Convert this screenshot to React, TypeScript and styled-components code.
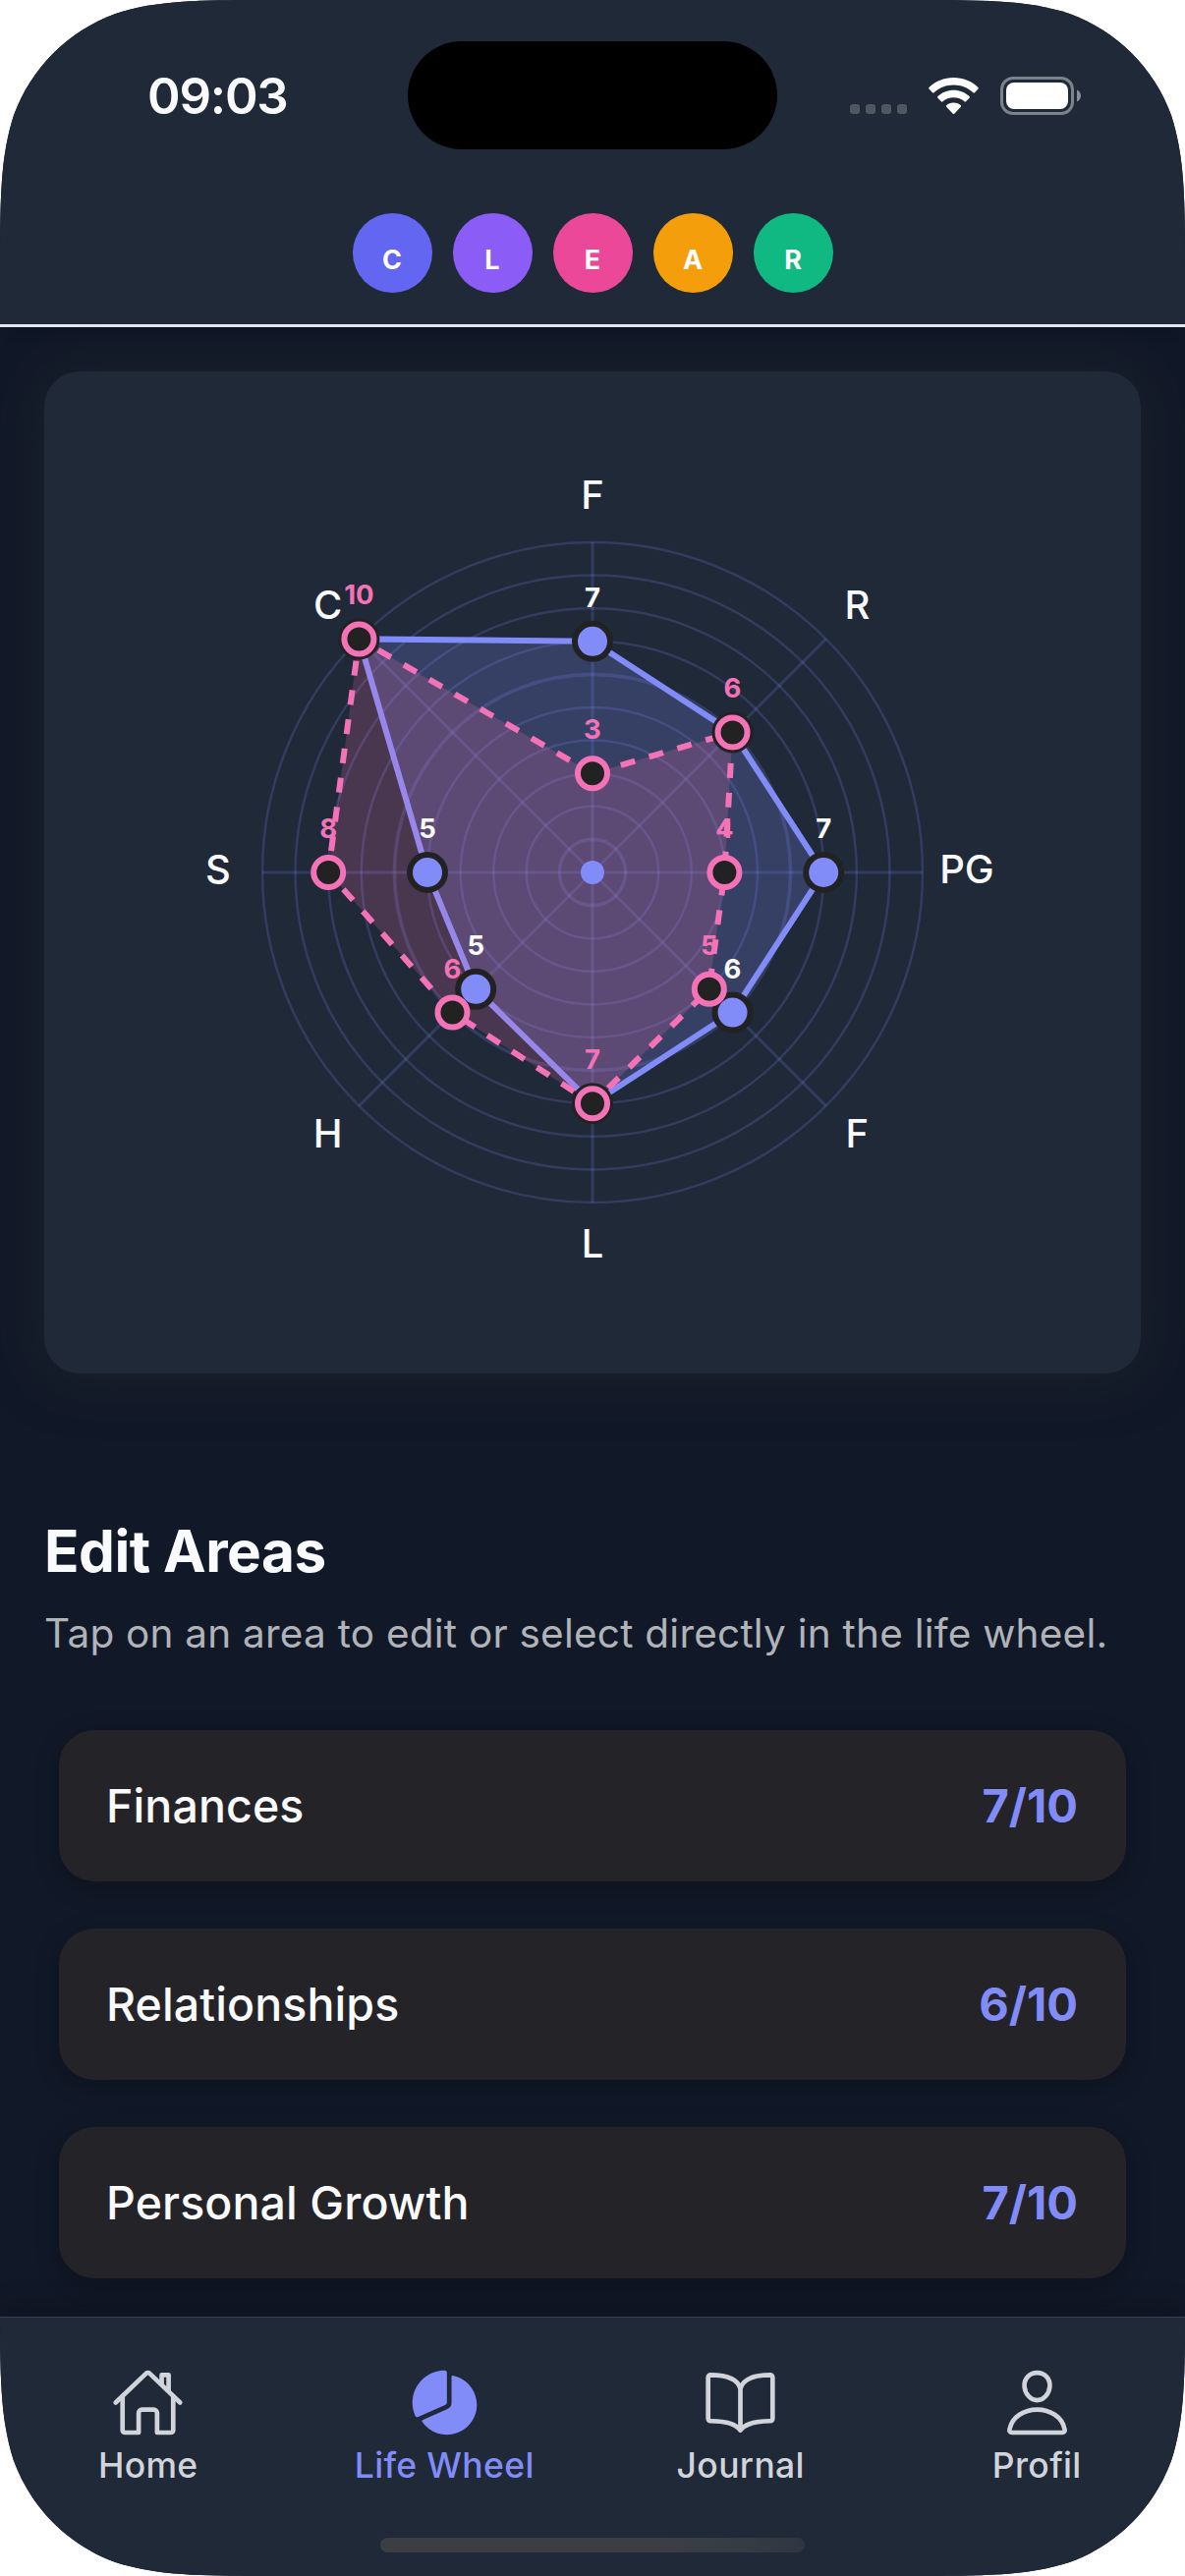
import React from 'react';
import styled, { createGlobalStyle } from 'styled-components';
import { IoHomeOutline, IoPieChart, IoBookOutline, IoPersonOutline } from 'react-icons/io5';

const WIDTH = 1206;
const HEIGHT = 2622;
const CORNER = 186;

const GlobalStyle = createGlobalStyle`
  html, body { margin: 0; padding: 0; background: #ffffff; }
  * { box-sizing: border-box; }
`;

/* Continuous-curvature corners of the phone's display. */
const screenOutline = (() => {
  const W = WIDTH;
  const H = HEIGHT;
  const [e, c1, c2, p, q, s, t] = [
    1.528665, 1.08849296, 0.86840694, 0.63149379, 0.07491139, 0.37282383, 0.16905956,
  ].map((k) => k * CORNER);
  return [
    `M${e} 0 L${W - e} 0`,
    `C${W - c1} 0 ${W - c2} 0 ${W - p} ${q}`,
    `C${W - s} ${t} ${W - t} ${s} ${W - q} ${p}`,
    `C${W} ${c2} ${W} ${c1} ${W} ${e}`,
    `L${W} ${H - e}`,
    `C${W} ${H - c1} ${W} ${H - c2} ${W - q} ${H - p}`,
    `C${W - t} ${H - s} ${W - s} ${H - t} ${W - p} ${H - q}`,
    `C${W - c2} ${H} ${W - c1} ${H} ${W - e} ${H}`,
    `L${e} ${H}`,
    `C${c1} ${H} ${c2} ${H} ${p} ${H - q}`,
    `C${s} ${H - t} ${t} ${H - s} ${q} ${H - p}`,
    `C0 ${H - c2} 0 ${H - c1} 0 ${H - e}`,
    `L0 ${e}`,
    `C0 ${c1} 0 ${c2} ${q} ${p}`,
    `C${t} ${s} ${s} ${t} ${p} ${q}`,
    `C${c2} 0 ${c1} 0 ${e} 0 Z`,
  ].join(' ');
})();

const Screen = styled.div`
  display: flex;
  flex-direction: column;
  width: ${WIDTH}px;
  height: ${HEIGHT}px;
  overflow: hidden;
  background: #111827;
  clip-path: path('${screenOutline}');
  font-family: Inter, 'Liberation Sans', sans-serif;
  color: #f9fafb;
`;

const Header = styled.header`
  position: relative;
  z-index: 1;
  flex: none;
  height: 333px;
  background: #1f2937;
  border-bottom: 3px solid #e5e7eb;
  box-shadow: 0 3px 12px rgba(0, 0, 0, 0.15);
`;

const StatusBar = styled.div`
  display: grid;
  grid-template-columns: 415px 376px 415px;
  align-items: center;
  height: 194px;
`;

const Clock = styled.div`
  padding-top: 1px;
  padding-left: 150px;
  font-size: 51px;
  font-weight: 600;
  line-height: 60px;
  letter-spacing: -1.2px;
`;

const Island = styled.div`
  height: 110px;
  border-radius: 55px;
  background: #000000;
`;

const Indicators = styled.div`
  display: flex;
  align-items: flex-end;
  gap: 22px;
  height: 39px;
  padding-left: 74px;
`;

const SignalDots = styled.div`
  display: flex;
  gap: 6px;
  margin-bottom: 1px;
`;

const SignalDot = styled.span`
  width: 10px;
  height: 10px;
  border-radius: 3px;
  background: #505761;
`;

const StepRow = styled.div`
  display: flex;
  justify-content: center;
  gap: 21px;
  padding-top: 23px;
`;

const StepBadge = styled.div<{ $color: string }>`
  display: flex;
  align-items: center;
  justify-content: center;
  width: 81px;
  height: 81px;
  padding-top: 14px;
  border-radius: 50%;
  background: ${(p) => p.$color};
  font-size: 27px;
  font-weight: 700;
  line-height: 32px;
  color: #ffffff;
`;

const Content = styled.main`
  flex: 1;
  min-height: 0;
  overflow: hidden;
  padding: 45px 45px 0;
`;

const WheelCard = styled.section`
  display: flex;
  height: 1020px;
  border-radius: 36px;
  background: #1f2937;
  box-shadow: 0 3px 54px rgba(34, 42, 48, 0.72);
`;

const SectionTitle = styled.h2`
  margin: 145px 0 0;
  font-size: 58.5px;
  font-weight: 700;
  line-height: 72px;
  letter-spacing: -0.5px;
`;

const SectionHint = styled.p`
  margin: 18px 0 0;
  font-size: 40.5px;
  font-weight: 400;
  line-height: 60px;
  letter-spacing: 0.23px;
  white-space: nowrap;
  color: #b0b3b8;
`;

const AreaList = styled.div`
  display: flex;
  flex-direction: column;
  gap: 48px;
  margin: 68px 15px 0;
`;

const AreaRow = styled.div`
  display: flex;
  align-items: center;
  justify-content: space-between;
  height: 154px;
  padding: 0 49px 0 48px;
  border-radius: 36px;
  background: #242328;
  box-shadow: 0 6px 24px rgba(0, 0, 0, 0.25);
`;

const AreaName = styled.span`
  font-size: 46.5px;
  font-weight: 500;
  line-height: 60px;
  letter-spacing: 0.1px;
`;

const AreaScore = styled.span`
  font-size: 47px;
  font-weight: 700;
  line-height: 60px;
  color: #818cf8;
`;

const TabBar = styled.nav`
  position: relative;
  display: grid;
  grid-template-columns: repeat(4, 1fr);
  flex: none;
  height: 264px;
  padding-top: 49px;
  border-top: 1px solid #374151;
  background: #1f2937;
  box-shadow: 0 -3px 30px rgba(0, 0, 0, 0.3);
`;

const Tab = styled.div<{ $active?: boolean }>`
  display: flex;
  flex-direction: column;
  align-items: center;
  height: 130px;
  color: ${(p) => (p.$active ? '#818cf8' : '#d1d5db')};
  svg { width: 75px; height: 75px; }
`;

const TabLabel = styled.span`
  margin-top: 7px;
  font-size: 35.5px;
  font-weight: 500;
  line-height: 40px;
  letter-spacing: 0.35px;
  white-space: nowrap;
`;

const HomeIndicator = styled.div`
  position: absolute;
  left: 387px;
  bottom: 24px;
  width: 432px;
  height: 15px;
  border-radius: 8px;
  background: linear-gradient(90deg, #3b3e43 0%, #3b3f44 65%, #373c44 85%, #2e3641 100%);
`;

const steps = [
  { letter: 'C', color: '#6366f1' },
  { letter: 'L', color: '#8b5cf6' },
  { letter: 'E', color: '#ec4899' },
  { letter: 'A', color: '#f59e0b' },
  { letter: 'R', color: '#10b981' },
];

const areas = [
  { label: 'F', current: 7, target: 3 },
  { label: 'R', current: 6, target: 6 },
  { label: 'PG', current: 7, target: 4 },
  { label: 'F', current: 6, target: 5 },
  { label: 'L', current: 7, target: 7 },
  { label: 'H', current: 5, target: 6 },
  { label: 'S', current: 5, target: 8 },
  { label: 'C', current: 10, target: 10 },
];

const rows = [
  { name: 'Finances', score: 7 },
  { name: 'Relationships', score: 6 },
  { name: 'Personal Growth', score: 7 },
];

const CX = 558;
const CY = 510;
const STEP = 33.6;

const polar = (index: number, radius: number) => {
  const a = (index * Math.PI) / 4 - Math.PI / 2;
  return { x: CX + radius * Math.cos(a), y: CY + radius * Math.sin(a) };
};

const outline = (values: number[]) =>
  values
    .map((v, i) => polar(i, v * STEP))
    .map(({ x, y }) => `${x.toFixed(2)},${y.toFixed(2)}`)
    .join(' ');

const AxisLabel = styled.text`
  font-size: 40px;
  font-weight: 500;
  fill: #f9fafb;
  text-anchor: middle;
`;

const ValueLabel = styled.text<{ $color: string }>`
  font-size: 27.5px;
  font-weight: 700;
  fill: ${(p) => p.$color};
  text-anchor: middle;
`;

function LifeWheel() {
  return (
    <svg width="1116" height="1020" viewBox="0 0 1116 1020">
      <g fill="none" stroke="#818cf8" strokeOpacity={0.2}>
        {Array.from({ length: 10 }, (_, i) => (
          <circle key={i} cx={CX} cy={CY} r={(i + 1) * STEP} strokeWidth={i === 0 || i === 5 ? 3.6 : 2.5} />
        ))}
        {areas.map((_, i) => {
          const end = polar(i, 10 * STEP);
          return <line key={i} x1={CX} y1={CY} x2={end.x} y2={end.y} strokeWidth={3} />;
        })}
      </g>
      <polygon
        points={outline(areas.map((a) => a.current))}
        fill="#818cf8"
        fillOpacity={0.24}
        stroke="#818cf8"
        strokeWidth={6}
      />
      <polygon
        points={outline(areas.map((a) => a.target))}
        fill="#f472b6"
        fillOpacity={0.2}
        stroke="#f472b6"
        strokeWidth={6}
        strokeDasharray="15 15"
      />
      {areas.map((a, i) => {
        const p = polar(i, a.current * STEP);
        return <circle key={i} cx={p.x} cy={p.y} r={18} fill="#818cf8" stroke="#222222" strokeWidth={6} />;
      })}
      {areas.map((a, i) => {
        const p = polar(i, a.target * STEP);
        return <circle key={i} cx={p.x} cy={p.y} r={15} fill="#222222" stroke="#f472b6" strokeWidth={6} />;
      })}
      {areas.map((a, i) => {
        const c = polar(i, a.current * STEP);
        const t = polar(i, a.target * STEP);
        return (
          <g key={i}>
            {a.current !== a.target && (
              <ValueLabel $color="#fafafa" x={c.x} y={c.y - 35}>{a.current}</ValueLabel>
            )}
            <ValueLabel $color="#f472b6" x={t.x} y={t.y - 35}>{a.target}</ValueLabel>
          </g>
        );
      })}
      {areas.map((a, i) => {
        const p = polar(i, 381);
        return <AxisLabel key={i} x={p.x} y={p.y + 11}>{a.label}</AxisLabel>;
      })}
      <circle cx={CX} cy={CY} r={12} fill="#818cf8" />
    </svg>
  );
}

function WifiIcon() {
  return (
    <svg width="51" height="38" viewBox="0 0 51 38" fill="#ffffff">
      <path d="M25.5 0C35.300 0 44.200 3.700 50.500 10Q51.200 10.800 50.500 11.600L47 15.200Q46.200 15.900 45.400 15.200C40 10.200 33 7.500 25.500 7.500S11 10.200 5.600 15.200Q4.800 15.900 4 15.200L.5 11.600Q-.2 10.800 .5 10C6.800 3.700 15.700 0 25.500 0Z" />
      <path d="M25.500 12.800C31.700 12.800 37.400 15.200 41.600 19.100Q42.400 19.900 41.600 20.700L38.100 24.300Q37.300 25.100 36.500 24.300C33.500 21.700 29.700 20.200 25.500 20.200S17.500 21.700 14.500 24.300Q13.700 25.100 12.900 24.300L9.400 20.700Q8.600 19.900 9.400 19.100C13.600 15.200 19.300 12.800 25.500 12.800Z" />
      <path d="M25.500 25.600C28.400 25.600 31 26.600 32.800 28.200Q33.600 29 32.800 29.800L26.300 36.700Q25.500 37.400 24.700 36.700L18.200 29.800Q17.400 29 18.200 28.200C20 26.600 22.600 25.600 25.500 25.600Z" />
    </svg>
  );
}

function BatteryIcon() {
  return (
    <svg width="82" height="39" viewBox="0 0 82 39">
      <rect x="1.500" y="1.500" width="72" height="36" rx="11.500" fill="none" stroke="#7c828b" strokeWidth="3" />
      <rect x="6" y="6" width="63" height="27" rx="8" fill="#ffffff" />
      <path d="M78 13.500C80.500 14.500 82 16.900 82 19.500S80.500 24.500 78 25.500Z" fill="#8b9098" />
    </svg>
  );
}

export default function App() {
  return (
    <>
      <GlobalStyle />
      <Screen>
        <Header>
          <StatusBar>
            <Clock>09:03</Clock>
            <Island />
            <Indicators>
              <SignalDots>
                <SignalDot />
                <SignalDot />
                <SignalDot />
                <SignalDot />
              </SignalDots>
              <WifiIcon />
              <BatteryIcon />
            </Indicators>
          </StatusBar>
          <StepRow>
            {steps.map((s) => (
              <StepBadge key={s.letter} $color={s.color}>{s.letter}</StepBadge>
            ))}
          </StepRow>
        </Header>
        <Content>
          <WheelCard>
            <LifeWheel />
          </WheelCard>
          <SectionTitle>Edit Areas</SectionTitle>
          <SectionHint>Tap on an area to edit or select directly in the life wheel.</SectionHint>
          <AreaList>
            {rows.map((r) => (
              <AreaRow key={r.name}>
                <AreaName>{r.name}</AreaName>
                <AreaScore>{r.score}/10</AreaScore>
              </AreaRow>
            ))}
          </AreaList>
        </Content>
        <TabBar>
          <Tab>
            <IoHomeOutline />
            <TabLabel>Home</TabLabel>
          </Tab>
          <Tab $active>
            <IoPieChart />
            <TabLabel>Life Wheel</TabLabel>
          </Tab>
          <Tab>
            <IoBookOutline />
            <TabLabel>Journal</TabLabel>
          </Tab>
          <Tab>
            <IoPersonOutline />
            <TabLabel>Profil</TabLabel>
          </Tab>
          <HomeIndicator />
        </TabBar>
      </Screen>
    </>
  );
}
